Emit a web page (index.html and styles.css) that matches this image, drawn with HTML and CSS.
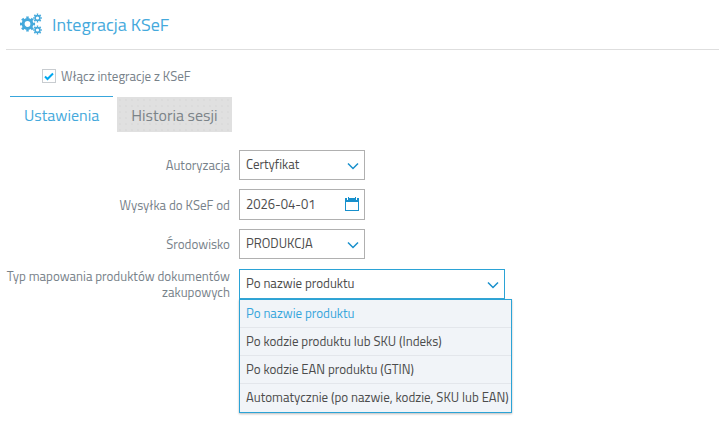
FILE: index.html
```html
<!DOCTYPE html>
<html lang="pl">
<head>
<meta charset="utf-8">
<meta name="viewport" content="width=device-width, initial-scale=1">
<title>Integracja KSeF</title>
<link rel="stylesheet" href="styles.css">
</head>
<body>
<header class="page-header">
  <svg class="gears" viewBox="0 0 24 24" aria-hidden="true">
    <g fill="none" stroke="currentColor">
      <circle cx="7.5" cy="11" r="4.4" stroke-width="3"/>
      <circle cx="7.5" cy="11" r="6.4" stroke-width="2.4" pathLength="16" stroke-dasharray="1 1" stroke-dashoffset="0.5"/>
      <circle cx="17.5" cy="5" r="2.4" stroke-width="1.6"/>
      <circle cx="17.5" cy="5" r="3.7" stroke-width="1.5" pathLength="16" stroke-dasharray="1 1" stroke-dashoffset="0.5"/>
      <circle cx="17.5" cy="17" r="2.4" stroke-width="1.6"/>
      <circle cx="17.5" cy="17" r="3.7" stroke-width="1.5" pathLength="16" stroke-dasharray="1 1" stroke-dashoffset="0.5"/>
    </g>
  </svg>
  <h1 class="title">Integracja KSeF</h1>
</header>
<main class="content">
  <div class="enable">
    <input class="checkbox" type="checkbox" id="enable" checked>
    <label for="enable">Włącz integracje z KSeF</label>
  </div>
  <div class="tabs" role="tablist">
    <button class="tab tab-active" type="button" role="tab" aria-selected="true">Ustawienia</button>
    <button class="tab" type="button" role="tab" aria-selected="false">Historia sesji</button>
  </div>
  <form class="form">
    <div class="row">
      <label class="label" for="auth">Autoryzacja</label>
      <div class="field">
        <select class="control" id="auth"><option>Certyfikat</option></select>
        <svg class="chevron" viewBox="0 0 12 8" aria-hidden="true"><path d="M1 1.5 6 6.5 11 1.5"/></svg>
      </div>
    </div>
    <div class="row">
      <label class="label" for="from">Wysyłka do KSeF od</label>
      <div class="field">
        <input class="control control-date" type="text" id="from" value="2026-04-01">
        <button class="calendar" type="button" aria-label="Kalendarz">
          <svg viewBox="0 0 14 14" aria-hidden="true">
            <path fill="currentColor" fill-rule="evenodd" d="M0 1H2V3H3V0H4V1H10V0H11V3H12V1H14V14H0ZM1 5V13H13V5Z"/>
          </svg>
        </button>
      </div>
    </div>
    <div class="row">
      <label class="label" for="env">Środowisko</label>
      <div class="field">
        <select class="control" id="env"><option>PRODUKCJA</option></select>
        <svg class="chevron" viewBox="0 0 12 8" aria-hidden="true"><path d="M1 1.5 6 6.5 11 1.5"/></svg>
      </div>
    </div>
    <div class="row">
      <label class="label" for="mapping">Typ mapowania produktów dokumentów zakupowych</label>
      <div class="field field-wide">
        <select class="control control-open" id="mapping"><option>Po nazwie produktu</option></select>
        <svg class="chevron" viewBox="0 0 12 8" aria-hidden="true"><path d="M1 1.5 6 6.5 11 1.5"/></svg>
        <ul class="menu" role="listbox">
          <li class="option option-selected" role="option" aria-selected="true">Po nazwie produktu</li>
          <li class="option" role="option">Po kodzie produktu lub SKU (Indeks)</li>
          <li class="option" role="option">Po kodzie EAN produktu (GTIN)</li>
          <li class="option" role="option">Automatycznie (po nazwie, kodzie, SKU lub EAN)</li>
        </ul>
      </div>
    </div>
  </form>
</main>
</body>
</html>
```
FILE: styles.css
```css
* {
  box-sizing: border-box;
}

body {
  min-height: 100vh;
  margin: 0;
  background: #fff;
  color: #78828a;
  font: 400 13px/16px "Titillium Web", Roboto, sans-serif;
}

button,
input,
select {
  margin: 0;
  font: inherit;
}

.page-header {
  display: flex;
  align-items: center;
  gap: 8px;
  height: 50px;
  margin-left: 6px;
  padding-left: 14px;
  border-bottom: 1px solid #dedede;
  color: #45a9dc;
}

.gears {
  width: 24px;
  height: 24px;
}

.title {
  margin: 0;
  font-size: 18px;
  line-height: 24px;
  font-weight: 400;
}

.content {
  padding: 18px 4px;
}

.enable {
  display: flex;
  align-items: center;
  gap: 5px;
  margin-left: 38px;
}

.checkbox {
  appearance: none;
  width: 14px;
  height: 14px;
  border: 1px solid #c8ccd0;
  background: #fff;
}

.checkbox:checked {
  background: url("data:image/svg+xml,%3Csvg xmlns='http://www.w3.org/2000/svg' viewBox='0 0 12 12'%3E%3Cpath d='M2 6.5 4.5 9 10 3.5' fill='none' stroke='%2300a8f0' stroke-width='2'/%3E%3C/svg%3E");
}

.tabs {
  display: flex;
  gap: 4px;
  margin: 12px 0 0 6px;
}

.tab {
  height: 36px;
  padding: 1px 14px 0;
  border: 0;
  border-top: 1px solid #fff;
  background: radial-gradient(circle, #d8d8d8 0.5px, #e0e0e0 1px) 0 0 / 6px 6px padding-box;
  color: #7b8388;
  font-size: 16px;
}

.tab-active {
  border-top-color: #38a6dc;
  background: #fff;
  color: #45a9dc;
}

.form {
  display: grid;
  gap: 9px;
  margin-top: 18px;
}

.row {
  display: grid;
  grid-template-columns: 226px 1fr;
  gap: 9px;
  align-items: center;
}

.label {
  text-align: right;
}

.field {
  position: relative;
  width: 126px;
}

.field-wide {
  width: 266px;
}

.control {
  display: block;
  appearance: none;
  width: 100%;
  height: 30px;
  padding: 0 28px 2px 6px;
  border: 1px solid #b0b0b0;
  border-radius: 0;
  background: #fff;
  color: #4c4c4c;
}

.control-date {
  height: 31px;
}

.control-open {
  border-color: #2ba3d6;
}

.chevron {
  position: absolute;
  top: 12px;
  right: 6px;
  width: 12px;
  height: 8px;
  fill: none;
  stroke: #1890cc;
  stroke-width: 1.5;
  pointer-events: none;
}

.calendar {
  position: absolute;
  top: 8px;
  right: 6px;
  width: 14px;
  height: 14px;
  padding: 0;
  border: 0;
  background: none;
  color: #1890cc;
}

.calendar svg {
  display: block;
}

.menu {
  position: absolute;
  top: 100%;
  left: 0;
  width: max-content;
  min-width: 100%;
  margin: 0;
  padding: 0;
  border: 1px solid #2ba3d6;
  background: #f1f4f8;
  box-shadow: 0 1px 2px #bbb;
  color: #4c4c4c;
  list-style: none;
}

.option {
  padding: 5px 2px 6px 6px;
  border-bottom: 1px solid #e3e6eb;
}

.option:last-child {
  border-color: transparent;
}

.option-selected {
  color: #38a6dc;
}
```
